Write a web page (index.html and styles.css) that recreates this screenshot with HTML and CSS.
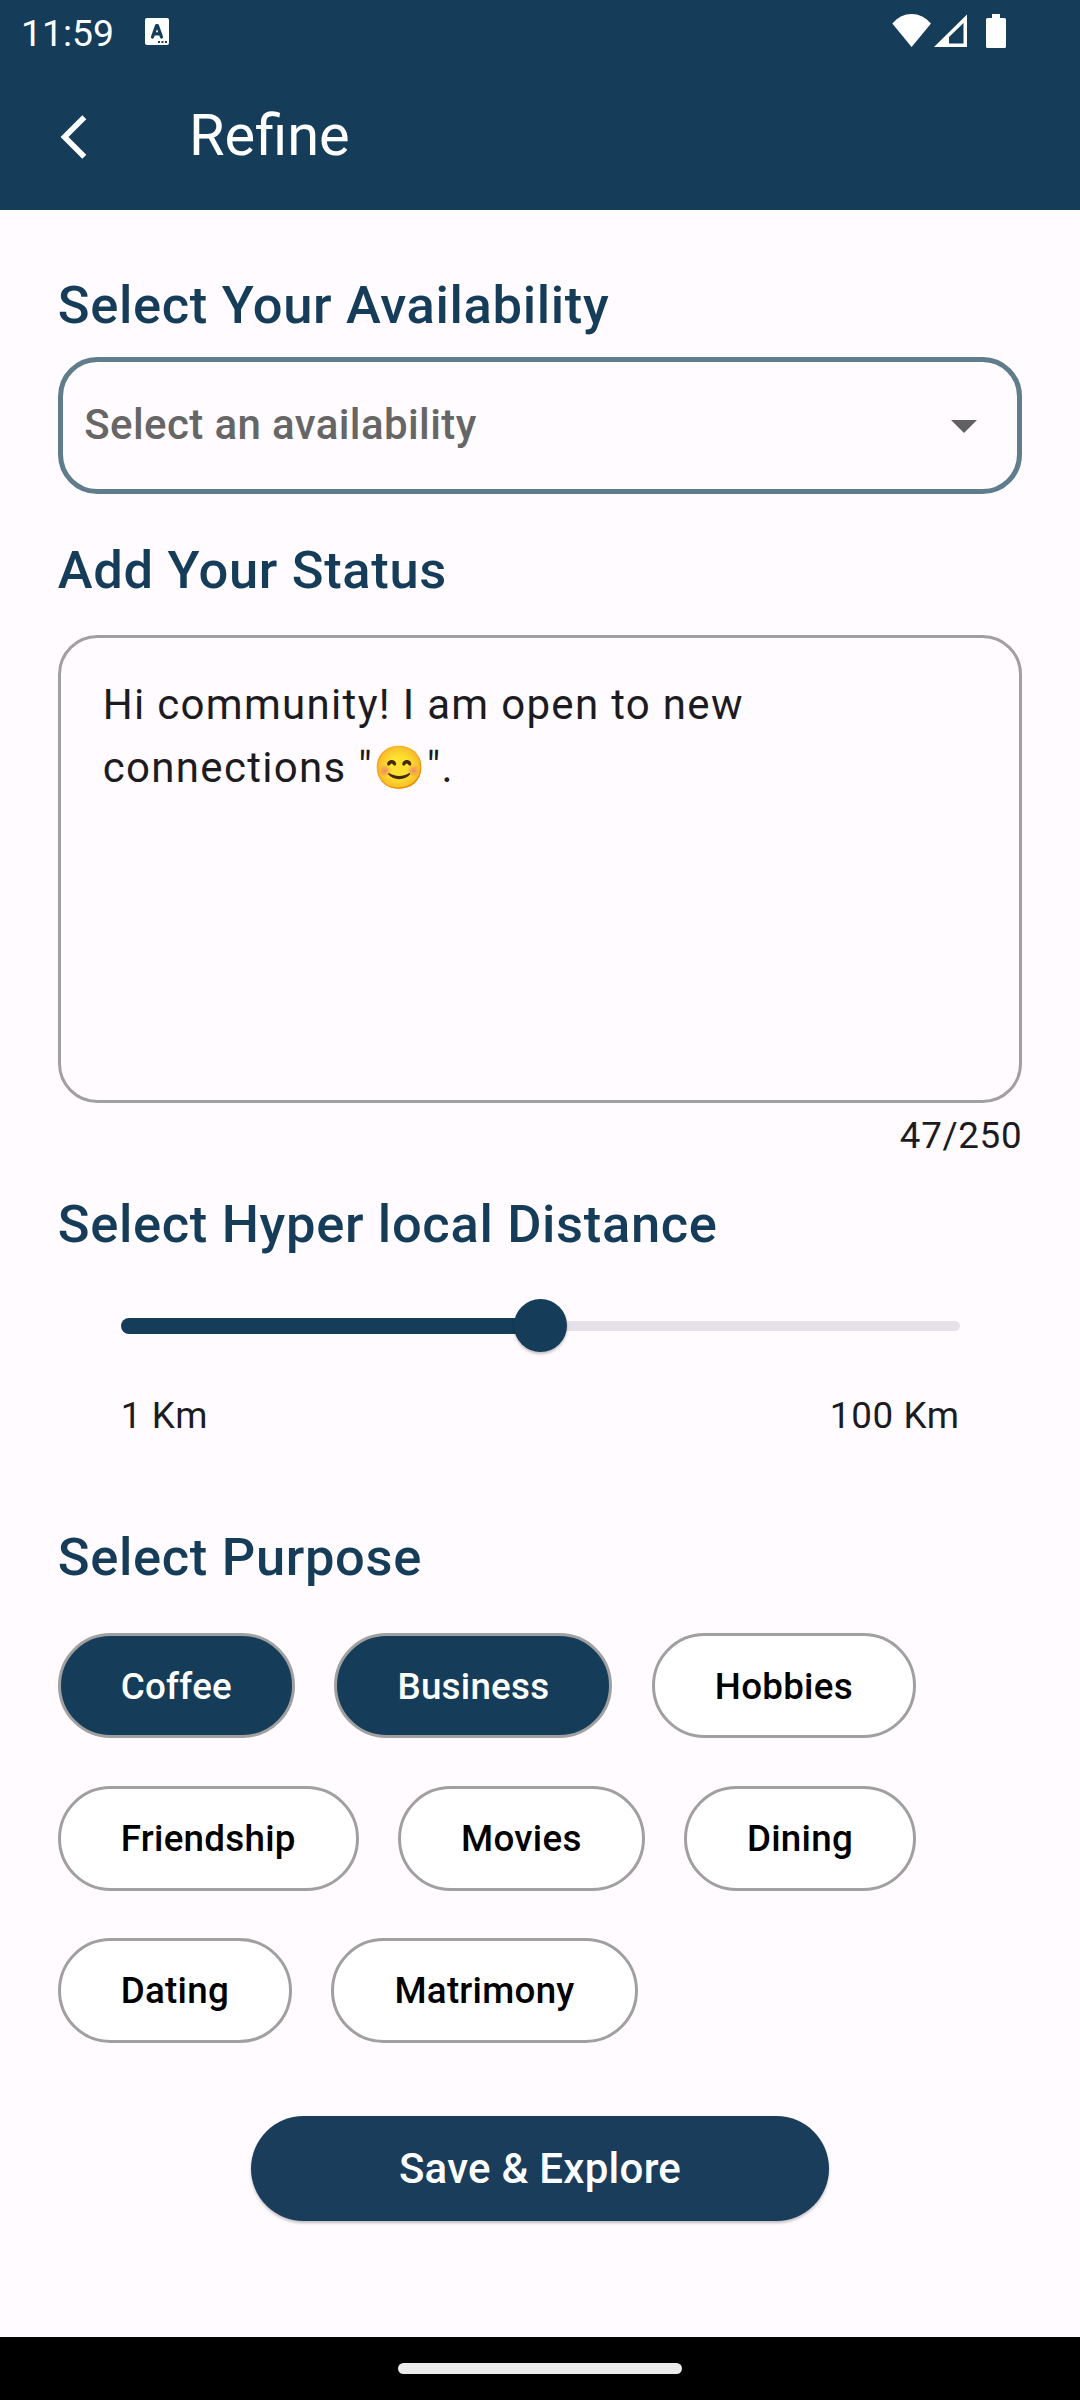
FILE: index.html
```html
<!DOCTYPE html>
<html lang="en">
<head>
<meta charset="utf-8">
<title>Refine</title>
<link rel="stylesheet" href="styles.css">
</head>
<body>
<div class="screen">
  <header class="top">
    <div class="status-bar">
      <span class="time">11:59</span>
      <svg class="notif" viewBox="0 0 24 27" width="24" height="27">
        <rect width="24" height="27" rx="2" fill="#fff"/>
        <path d="M7.500 19 L11.600 7.500 H12.400 L16.500 19 M8.800 15.800 H15.200" fill="none" stroke="#153d59" stroke-width="3.200" stroke-linecap="round" stroke-linejoin="round"/>
        <path d="M13 23h2v2h-2zM16.500 23h2v2h-2zM20 23h2v2h-2z" fill="#153d59"/>
      </svg>
      <svg class="system" viewBox="0 0 116 36" width="116" height="36" fill="#fff">
        <path d="M0.300 9.500 Q8 0 19.600 0 Q31 0 39 9.500 L19.600 33Z"/>
        <path fill-rule="evenodd" d="M42 33 L75 0.500 V33Z M57 29.500 H71.500 V9 L57 23Z"/>
        <path d="M100 0h8v4h4.500q1.500 0 1.500 1.500v27q0 1.500-1.500 1.500h-17q-1.500 0-1.500-1.500v-27q0-1.500 1.500-1.500h4.500z"/>
      </svg>
    </div>
    <div class="app-bar">
      <svg class="back" viewBox="0 0 28 46" width="28" height="46">
        <path d="M24.300 3.200 L4.500 23 L24.300 42.800" fill="none" stroke="#fff" stroke-width="5.600"/>
      </svg>
      <h1 class="title">Refine</h1>
    </div>
  </header>

  <main class="content">
    <h2 class="heading">Select Your Availability</h2>
    <div class="dropdown">
      <span>Select an availability</span>
      <svg class="caret" viewBox="0 0 26 13" width="26" height="13"><path d="M0 0H26L13 13Z" fill="#616161"/></svg>
    </div>

    <h2 class="heading heading-status">Add Your Status</h2>
    <div class="status-field">Hi community! I am open to new<br>connections "<span class="emoji">😊</span>".</div>
    <div class="counter">47/250</div>

    <h2 class="heading heading-distance">Select Hyper local Distance</h2>
    <div class="distance">
      <div class="slider">
        <div class="active"></div>
        <div class="thumb"></div>
        <div class="inactive"></div>
      </div>
      <div class="range"><span>1 Km</span><span>100 Km</span></div>
    </div>

    <h2 class="heading heading-purpose">Select Purpose</h2>
    <div class="chips">
      <div class="chip-row"><span class="chip selected">Coffee</span><span class="chip selected">Business</span><span class="chip">Hobbies</span></div>
      <div class="chip-row"><span class="chip">Friendship</span><span class="chip">Movies</span><span class="chip">Dining</span></div>
      <div class="chip-row"><span class="chip">Dating</span><span class="chip">Matrimony</span></div>
    </div>

    <button class="save">Save &amp; Explore</button>
  </main>

  <footer class="nav"><div class="pill"></div></footer>
</div>
</body>
</html>
```
FILE: styles.css
```css
* { box-sizing: border-box; }

body {
  margin: 0;
  font-family: Roboto, "Noto Color Emoji", sans-serif;
  color: #1c1b1f;
}

.screen {
  display: flex;
  flex-direction: column;
  width: 1080px;
  height: 2400px;
  background: #fffbff;
}

.top {
  height: 210px;
  background: #153d59;
  color: #fff;
}

.status-bar {
  display: flex;
  align-items: flex-start;
  height: 63px;
  padding-left: 21px;
}

.time {
  width: 124px;
  margin-top: 7px;
  font-size: 37.3px;
  line-height: 52px;
}

.notif { margin-top: 18px; }

.system {
  margin: 14px 72px 0 auto;
}

.app-bar {
  display: flex;
  align-items: center;
  height: 147px;
  padding-left: 60px;
}

.title {
  margin: 0 0 3px 101px;
  font-size: 57.75px;
  font-weight: 400;
  line-height: 74px;
}

.content {
  flex: 1;
  display: flex;
  flex-direction: column;
  padding: 58px 57.75px 0 57.75px;
}

.heading {
  margin: 0;
  font-size: 52.5px;
  font-weight: 500;
  line-height: 75px;
  letter-spacing: 0.66px;
  color: #153d59;
}

.heading-status { margin-top: 39px; }
.heading-distance { margin-top: 25px; }
.heading-purpose { margin-top: 78.3px; }

.dropdown {
  display: flex;
  align-items: center;
  justify-content: space-between;
  height: 137px;
  margin-top: 14px;
  padding: 0 40px 2px 21.5px;
  border: 5px solid #607d8b;
  border-radius: 39.4px;
  font-size: 42px;
  font-weight: 500;
  letter-spacing: 0.39px;
  color: #666;
}

.caret { margin-top: 3px; }

.status-field {
  height: 468px;
  margin-top: 27px;
  padding: 35px 42px 0;
  border: 3px solid #a0a0a0;
  border-radius: 39.4px;
  font-size: 42px;
  line-height: 63px;
  letter-spacing: 1.31px;
}

.counter {
  margin-top: 7px;
  font-size: 36.75px;
  line-height: 52px;
  letter-spacing: 0.66px;
  text-align: right;
}

.distance { padding: 37px 62.5px 0 63px; }

.slider {
  display: flex;
  align-items: center;
  height: 53px;
}

.active {
  flex: 1;
  height: 16px;
  margin-right: -4px;
  border-radius: 8px 0 0 8px;
  background: #153d59;
}

.thumb {
  width: 53px;
  height: 53px;
  border-radius: 50%;
  background: #153d59;
  box-shadow: 0 2px 3px rgba(0, 0, 0, 0.25);
}

.inactive {
  flex: 1;
  height: 10px;
  margin-left: -4px;
  border-radius: 0 5px 5px 0;
  background: #e6e0e9;
}

.active, .inactive { z-index: 0; }
.thumb { z-index: 1; }

.range {
  display: flex;
  justify-content: space-between;
  margin-top: 38px;
  font-size: 36.75px;
  line-height: 52px;
  letter-spacing: 0.66px;
}

.chips {
  display: flex;
  flex-direction: column;
  gap: 47.25px;
  margin-top: 38px;
}

.chip-row {
  display: flex;
  gap: 39.4px;
}

.chip {
  display: flex;
  align-items: center;
  height: 105px;
  padding: 1px 60px 0;
  border: 3px solid #a0a0a0;
  border-radius: 53px;
  background: #fff;
  color: #000;
  font-size: 36.75px;
  font-weight: 500;
  letter-spacing: 0.26px;
}

.chip.selected {
  background: #153d59;
  color: #fff;
}

.save {
  align-self: center;
  width: 577.5px;
  height: 105px;
  margin-top: 73.5px;
  border: 0;
  border-radius: 53px;
  background: #1a3d5c;
  box-shadow: 0 2px 3px rgba(0, 0, 0, 0.25);
  color: #fff;
  font: 500 42px Roboto, sans-serif;
  letter-spacing: 0.26px;
}

.nav {
  display: flex;
  align-items: center;
  justify-content: center;
  height: 63px;
  background: #000;
}

.pill {
  width: 284px;
  height: 11px;
  border-radius: 6px;
  background: #ebebeb;
}
```
